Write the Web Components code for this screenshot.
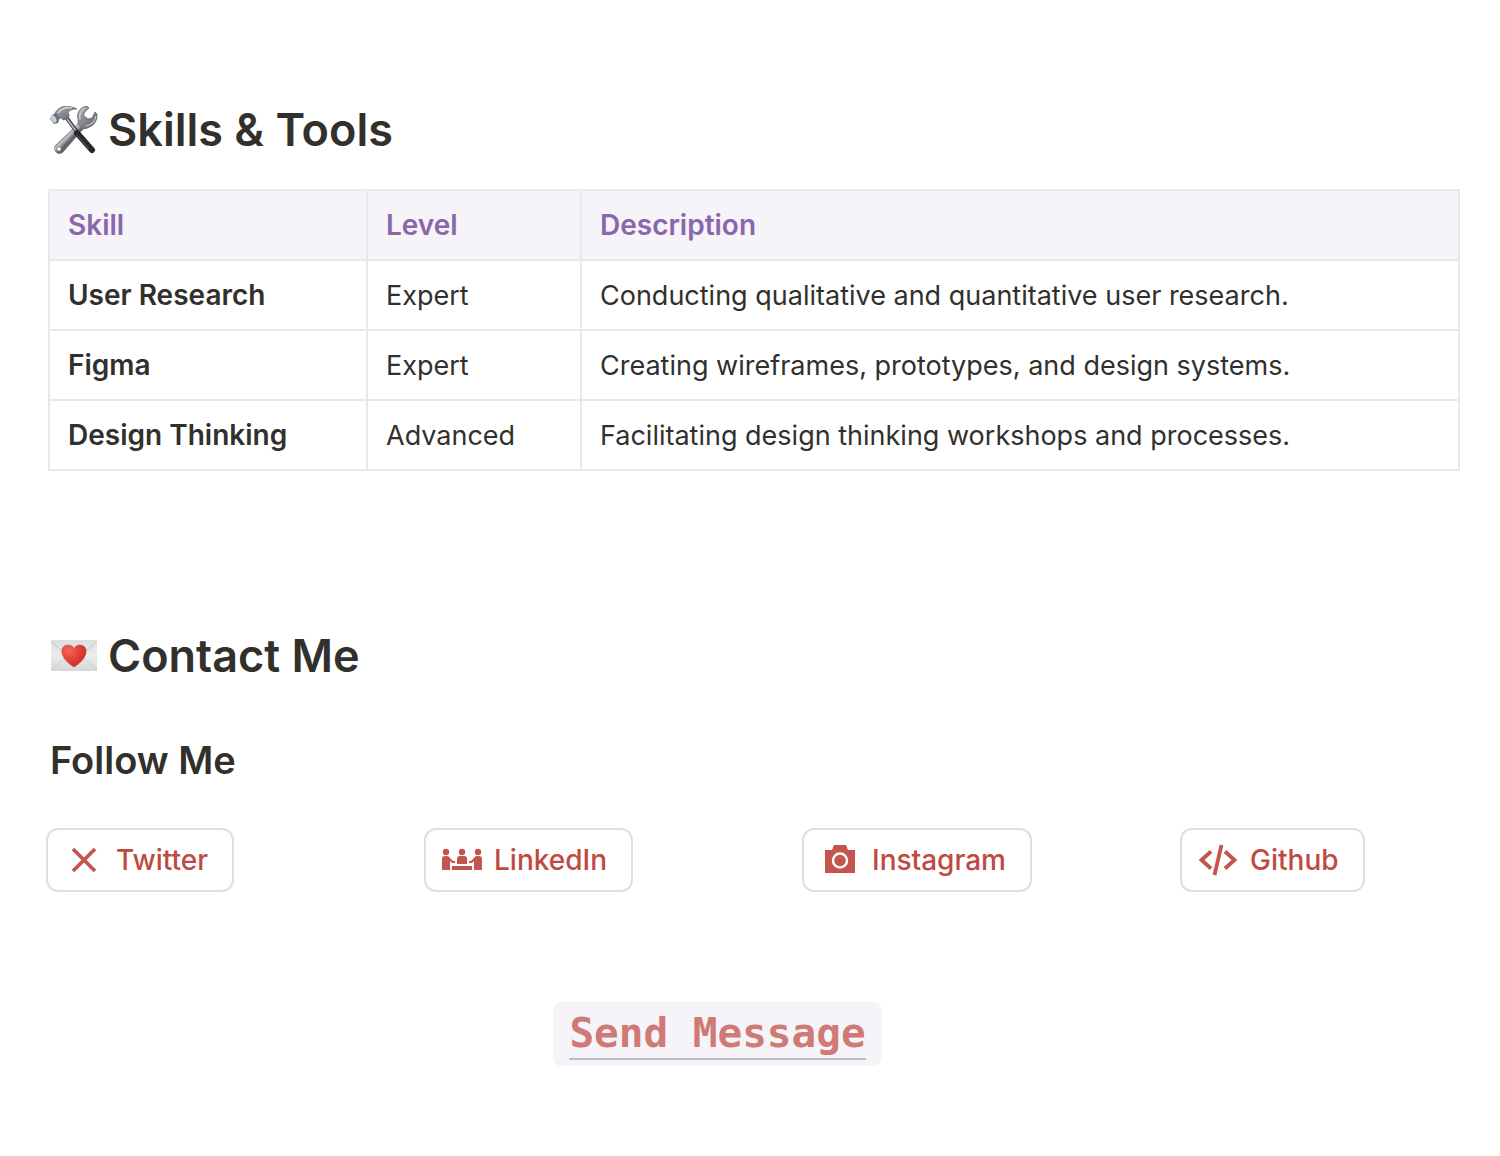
<!DOCTYPE html>
<html lang="en">
<head>
<meta charset="utf-8">
<meta name="viewport" content="width=device-width, initial-scale=1">
<title>Portfolio</title>
<style>
  body {
    margin: 0;
    background: #fff;
    color: #32302c;
    font-family: Inter, "Liberation Sans", sans-serif;
    font-size: 27px;
    line-height: 40px;
  }
</style>
</head>
<body>
<portfolio-page>
  <page-section>
    <section-heading>
      <tools-icon slot="icon"></tools-icon>
      Skills &amp; Tools
    </section-heading>
    <skills-table></skills-table>
  </page-section>
  <page-section>
    <section-heading>
      <letter-icon slot="icon"></letter-icon>
      Contact Me
    </section-heading>
    <sub-heading>Follow Me</sub-heading>
    <social-links>
      <social-link icon="cross">Twitter</social-link>
      <social-link icon="meeting">LinkedIn</social-link>
      <social-link icon="camera">Instagram</social-link>
      <social-link icon="code">Github</social-link>
    </social-links>
    <send-message>Send Message</send-message>
  </page-section>
</portfolio-page>

<script>
function define(name, html) {
  customElements.define(name, class extends HTMLElement {
    constructor() {
      super();
      this.attachShadow({mode: 'open'}).innerHTML = html;
    }
  });
}

define('portfolio-page', `
  <style>
    :host {
      display: block;
    }

    main {
      display: flex;
      flex-direction: column;
      gap: 155px;
      padding: 100px 40px 90px 48px;
    }
  </style>
  <main><slot></slot></main>
`);

define('page-section', `
  <style>
    :host {
      display: block;
    }
  </style>
  <section><slot></slot></section>
`);

define('section-heading', `
  <style>
    :host {
      display: block;
    }

    h2 {
      display: flex;
      align-items: center;
      gap: 10px;
      margin: 0 0 29px;
      padding-left: 2px;
      font-size: 45px;
      font-weight: 600;
      line-height: 60px;
    }
  </style>
  <h2><slot name="icon"></slot><span><slot></slot></span></h2>
`);

define('sub-heading', `
  <style>
    :host {
      display: block;
    }

    h3 {
      margin: 46px 0 40px;
      padding-left: 2px;
      font-size: 38px;
      font-weight: 600;
      line-height: 56px;
    }
  </style>
  <h3><slot></slot></h3>
`);

define('tools-icon', `
  <style>
    :host, svg {
      display: block;
    }
  </style>
  <svg width="48" height="48" viewBox="0 0 48 48" aria-hidden="true">
    <defs>
      <linearGradient id="steel" x1="0" y1="0" x2="1" y2="1">
        <stop offset="0" stop-color="#aeb2ba"/>
        <stop offset=".5" stop-color="#85868d"/>
        <stop offset="1" stop-color="#5c5d65"/>
      </linearGradient>
      <linearGradient id="shaft" gradientUnits="userSpaceOnUse" x1="17" y1="27" x2="22" y2="32">
        <stop offset="0" stop-color="#8e8d94"/>
        <stop offset=".4" stop-color="#c3c1c6"/>
        <stop offset="1" stop-color="#62626a"/>
      </linearGradient>
    </defs>
    <path fill="url(#shaft)" stroke="#66666e" stroke-width=".6" d="M29 17 L6 39 C4 41 4 44 6 46 C8 48 11 48 13 46 L34 22 Z"/>
    <path fill="url(#steel)" stroke="#5f6068" stroke-width=".7" d="M37 0 C30 1 26 7 28 13 L28 18 L33 23 C42 22 48 16 47 8 L45 6 L42 12 L38 13 L34 10 L34 7 L39 2 Z"/>
    <path fill="none" stroke="#cfd0d5" stroke-width="1.2" d="M35 2 C30 5 29 9 30 14 M36 20 C41 19 45 15 46 10"/>
    <circle cx="9" cy="43" r="2.2" fill="#fff" stroke="#66666e" stroke-width=".7"/>
    <path fill="none" stroke="#4c4e56" stroke-width="4" d="M16 11 L27 26"/>
    <path fill="none" stroke="#c3bcb6" stroke-width="1.4" d="M17 13 L26 25"/>
    <path fill="none" stroke="#26292b" stroke-width="6" stroke-linecap="round" d="M27 27 L42 44"/>
    <path fill="none" stroke="#484e50" stroke-width="1.2" d="M27 29 L39 43"/>
    <path fill="url(#steel)" stroke="#5f636c" stroke-width=".7" d="M5 7 C9 0 17 -2 27 3 C23 3 19 4 18 7 C20 9 19 11 17 13 L13 14 C11 11 9 12 7 14 Z"/>
    <path fill="none" stroke="#dde2e8" stroke-width="1.2" d="M8 7 C12 2 17 1 22 2"/>
    <path fill="#68717d" d="M2 9 L6 7 L10 12 L8 17 L4 18 L0 13 Z"/>
    <ellipse cx="3.500" cy="13" rx="2.500" ry="4" transform="rotate(-32 3.500 13)" fill="#c7d0da"/>
  </svg>
`);

define('letter-icon', `
  <style>
    :host, svg {
      display: block;
    }
  </style>
  <svg width="48" height="48" viewBox="0 0 48 48" aria-hidden="true">
    <defs>
      <linearGradient id="paper" x1="0" y1="0" x2="0" y2="1">
        <stop offset="0" stop-color="#dededf"/>
        <stop offset=".5" stop-color="#ececec"/>
        <stop offset="1" stop-color="#d6d6d7"/>
      </linearGradient>
      <radialGradient id="heart" cx=".3" cy=".25" r=".8">
        <stop offset="0" stop-color="#f66659"/>
        <stop offset=".55" stop-color="#e33f36"/>
        <stop offset="1" stop-color="#c22e29"/>
      </radialGradient>
    </defs>
    <rect x="1" y="8" width="46" height="31" rx="1" fill="url(#paper)"/>
    <path fill="none" stroke="#b8c0c3" stroke-width=".8" d="M1 9 L21 27 Q24 30 27 27 L47 9"/>
    <path fill="none" stroke="#c3c8ca" stroke-width=".8" d="M1 38 L17 24 M47 38 L31 24"/>
    <path fill="url(#heart)" stroke="#bd4f48" stroke-width=".5" d="M24 35 C19 32 13 27 12 21 C11 16 14 13 18 13 C21 13 23 14 24 17 C25 14 27 13 30 13 C34 13 37 16 36 21 C35 27 29 32 24 35 Z"/>
  </svg>
`);

const skills = [
  ['User Research', 'Expert', 'Conducting qualitative and quantitative user research.'],
  ['Figma', 'Expert', 'Creating wireframes, prototypes, and design systems.'],
  ['Design Thinking', 'Advanced', 'Facilitating design thinking workshops and processes.']
];

define('skills-table', `
  <style>
    :host {
      display: block;
    }

    table {
      width: 100%;
      border-collapse: collapse;
      table-layout: fixed;
    }

    .skill {
      width: 318px;
    }

    .level {
      width: 214px;
    }

    th, td {
      box-sizing: border-box;
      height: 70px;
      padding: 14px 18px;
      border: 2px solid #e9e9e7;
      text-align: left;
      font-weight: 400;
    }

    td {
      padding: 15px 18px 13px;
    }

    th {
      font-size: 28px;
      font-weight: 600;
    }

    thead th {
      background: #f6f3f9;
      color: #8a67ab;
    }
  </style>
  <table>
    <colgroup><col class="skill"><col class="level"><col></colgroup>
    <thead>
      <tr><th scope="col">Skill</th><th scope="col">Level</th><th scope="col">Description</th></tr>
    </thead>
    <tbody>
      ${skills.map(([skill, level, text]) =>
        `<tr><th scope="row">${skill}</th><td>${level}</td><td>${text}</td></tr>`).join('')}
    </tbody>
  </table>
`);

define('social-links', `
  <style>
    :host {
      display: block;
      margin-left: -2px;
    }

    nav {
      display: grid;
      grid-template-columns: repeat(4, 1fr);
      justify-items: start;
      gap: 98px;
    }
  </style>
  <nav aria-label="Follow Me"><slot></slot></nav>
`);

const icons = {
  cross: `<path fill="none" stroke="currentColor" stroke-width="3.8" d="M9 9 L31 31 M31 9 L9 31"/>`,
  meeting: `
    <circle cx="4" cy="12" r="3.2"/><circle cx="20" cy="12" r="3.2"/><circle cx="36" cy="12" r="3.2"/>
    <path d="M0 30 V19 Q0 16 3 16 H5 Q7 16 8 18 L11 21 H13 V23 H10 L8 21 V30 Z"/>
    <path d="M40 30 V19 Q40 16 37 16 H35 Q33 16 32 18 L29 21 H27 V23 H30 L32 21 V30 Z"/>
    <path d="M15 24 V19 Q15 16 18 16 H22 Q25 16 25 19 V24 Z"/>
    <path d="M10 26 H30 V30 H10 Z"/>`,
  camera: `
    <path d="M5 10 H12 L14 5 H26 L28 10 H35 V33 H5 Z"/>
    <circle cx="20" cy="20.500" r="7" fill="#c4554d" stroke="#fff" stroke-width="2.4"/>`,
  code: `<path fill="none" stroke="currentColor" stroke-width="3.8" d="M13 11.500 L3.500 20 L13 28.500 M27 11.500 L36.500 20 L27 28.500 M23.500 5 L16.500 35"/>`
};

class SocialLink extends HTMLElement {
  constructor() {
    super();
    this.attachShadow({mode: 'open'});
  }

  connectedCallback() {
    this.shadowRoot.innerHTML = `
      <style>
        :host {
          display: block;
        }

        a {
          display: flex;
          align-items: center;
          gap: 12px;
          box-sizing: border-box;
          height: 64px;
          padding: 0 24px 0 16px;
          border: 2px solid #dfdfde;
          border-radius: 12px;
          color: #be4a42;
          font-size: 28px;
          font-weight: 500;
          text-decoration: none;
          white-space: nowrap;
        }

        svg {
          flex: none;
          color: #c4554d;
          fill: #c4554d;
        }
      </style>
      <a href="#">
        <svg width="40" height="40" viewBox="0 0 40 40" aria-hidden="true">${icons[this.getAttribute('icon')]}</svg>
        <slot></slot>
      </a>
    `;
  }
}

customElements.define('social-link', SocialLink);

define('send-message', `
  <style>
    :host {
      display: flex;
      justify-content: center;
      margin-top: 110px;
      padding-right: 73px;
    }

    a {
      padding: 6px 16px;
      border-radius: 8px;
      background: #f6f3f9;
      color: #cf7a75;
      font-family: "DejaVu Sans Mono", monospace;
      font-size: 41px;
      font-weight: 700;
      line-height: 50px;
      text-decoration: none;
    }

    span {
      display: block;
      border-bottom: 2px solid #bebac1;
    }
  </style>
  <a href="#"><span><slot></slot></span></a>
`);
</script>
</body>
</html>
